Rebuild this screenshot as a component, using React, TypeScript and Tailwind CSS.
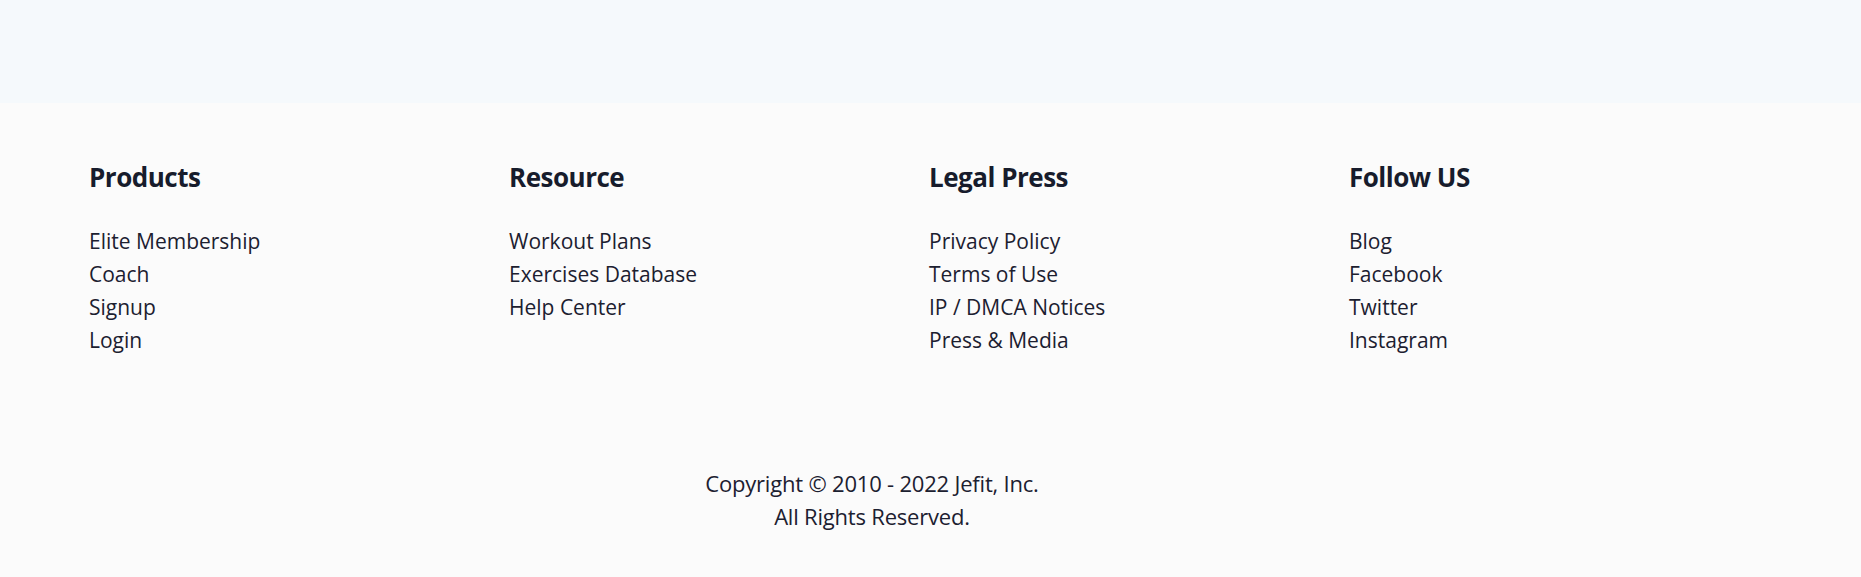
import React from 'react';

type Column = {
  title: string;
  links: string[];
};

const columns: Column[] = [
  { title: 'Products', links: ['Elite Membership', 'Coach', 'Signup', 'Login'] },
  { title: 'Resource', links: ['Workout Plans', 'Exercises Database', 'Help Center'] },
  { title: 'Legal Press', links: ['Privacy Policy', 'Terms of Use', 'IP / DMCA Notices', 'Press & Media'] },
  { title: 'Follow US', links: ['Blog', 'Facebook', 'Twitter', 'Instagram'] },
];

const App = () => {
  return (
    <div
      className="min-h-[577px] bg-[#fbfbfb] text-[#1c2030]"
      style={{ fontFamily: '"Open Sans", "Noto Sans", sans-serif' }}
    >
      {/* top band */}
      <div className="h-[103px] bg-[#f5f9fc]" />

      <footer className="pt-[56px] pb-[40px]">
        <div className="grid grid-cols-4 pl-[89px] pr-[92px]">
          {columns.map((col) => (
            <div key={col.title}>
              <h3 className="text-[26px] font-bold leading-[36px] tracking-[-0.5px] text-[#171c2c]">{col.title}</h3>
              <ul className="mt-[30px]">
                {col.links.map((link) => (
                  <li key={link}>
                    <a href="#" className="text-[21px] leading-[33px]">
                      {link}
                    </a>
                  </li>
                ))}
              </ul>
            </div>
          ))}
        </div>

        <div className="ml-[89px] mt-[110px] w-[1566px] text-center text-[22px] leading-[33px] tracking-[-0.2px]">
          <p>Copyright © 2010 - 2022 Jefit, Inc.</p>
          <p>All Rights Reserved.</p>
        </div>
      </footer>
    </div>
  );
};

export default App;
